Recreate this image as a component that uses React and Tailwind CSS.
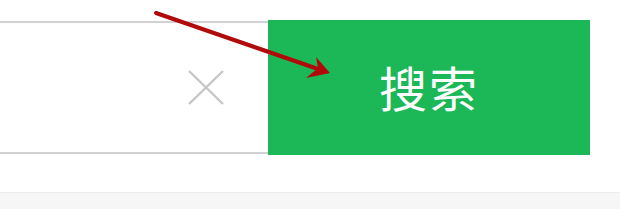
import React from "react";

export default function App() {
    return (
        <div className="relative w-[620px] h-[209px] bg-white overflow-hidden">
            <div className="flex items-start pt-[20px]">
                {/* input box, its left end is cut off */}
                <div className="w-[268px] h-[133px] mt-[1px] border-y-2 border-[#d2d2d2] bg-white flex items-center justify-end pr-[43px]">
                    <svg width="38" height="37" viewBox="0 0 38 37">
                        <path
                            d="M2 2 L36 35 M36 2 L2 35"
                            stroke="#c6c6c6"
                            strokeWidth="2.4"
                            fill="none"
                        />
                    </svg>
                </div>
                <button className="w-[322px] h-[135px] bg-[#1cb857] text-white flex items-center justify-center pb-[4px]">
                    <span
                        className="text-[48px] leading-none tracking-[2px]"
                        style={{ fontFamily: '"Noto Sans CJK SC", sans-serif', fontWeight: 400 }}
                    >
                        搜索
                    </span>
                </button>
            </div>
            <div className="absolute left-0 right-0 bottom-0 h-[17px] bg-[#f6f6f6] border-t border-[#ededed]"></div>

            {/* red annotation arrow */}
            <svg className="absolute left-0 top-0" width="620" height="209">
                <line
                    x1="156"
                    y1="13"
                    x2="318"
                    y2="69"
                    stroke="#b00a0a"
                    strokeWidth="4"
                    strokeLinecap="round"
                />
                <polygon points="330,73 316,57 318,68 306,78" fill="#b00a0a" />
            </svg>
        </div>
    );
}
